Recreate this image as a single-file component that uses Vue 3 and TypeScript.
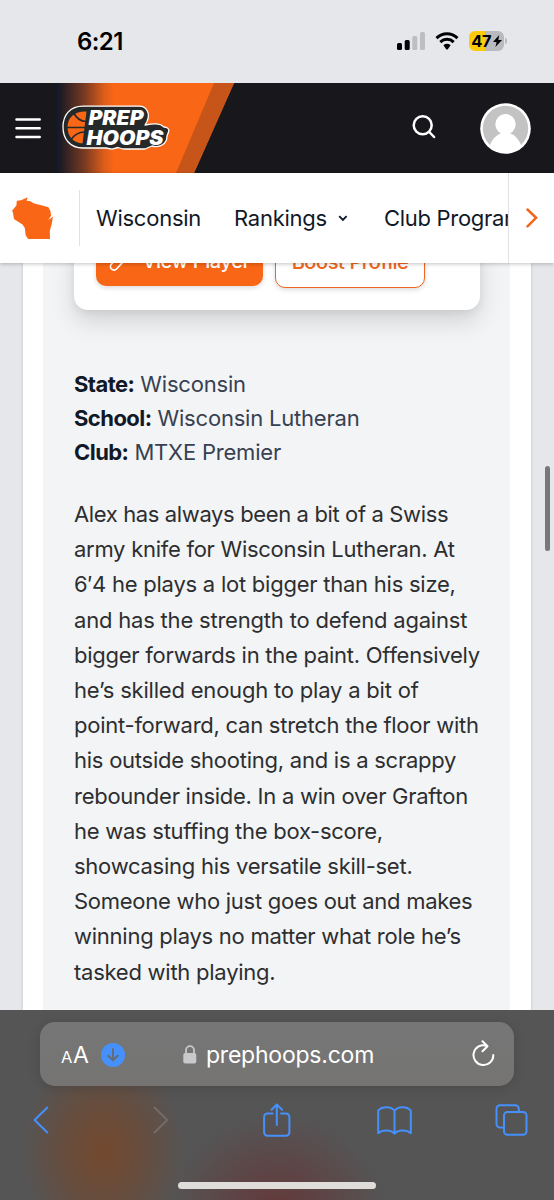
<script setup lang="ts">
interface Fact {
  label: string
  value: string
}

interface Line {
  text: string
  tracking: number
}

const facts: Fact[] = [
  { label: 'State:', value: 'Wisconsin' },
  { label: 'School:', value: 'Wisconsin Lutheran' },
  { label: 'Club:', value: 'MTXE Premier' },
]

const lines: Line[] = [
  { text: 'Alex has always been a bit of a Swiss', tracking: -0.37 },
  { text: 'army knife for Wisconsin Lutheran. At', tracking: -0.27 },
  { text: '6′4 he plays a lot bigger than his size,', tracking: -0.24 },
  { text: 'and has the strength to defend against', tracking: -0.2 },
  { text: 'bigger forwards in the paint. Offensively', tracking: -0.26 },
  { text: 'he’s skilled enough to play a bit of', tracking: -0.2 },
  { text: 'point-forward, can stretch the floor with', tracking: -0.25 },
  { text: 'his outside shooting, and is a scrappy', tracking: -0.25 },
  { text: 'rebounder inside. In a win over Grafton', tracking: -0.26 },
  { text: 'he was stuffing the box-score,', tracking: -0.27 },
  { text: 'showcasing his versatile skill-set.', tracking: -0.26 },
  { text: 'Someone who just goes out and makes', tracking: -0.27 },
  { text: 'winning plays no matter what role he’s', tracking: -0.25 },
  { text: 'tasked with playing.', tracking: -0.25 },
]
</script>

<template>
  <div class="phone">
    <div class="status">
      <span class="time">6:21</span>
      <div class="indicators">
        <svg class="signal" width="28" height="18" viewBox="0 0 28 18">
          <rect x="0" y="11" width="5" height="7" rx="1.5" />
          <rect x="7.7" y="8" width="5" height="10" rx="1.5" />
          <rect class="off" x="15.3" y="4" width="5" height="14" rx="1.5" />
          <rect class="off" x="23" y="0" width="5" height="18" rx="1.5" />
        </svg>
        <svg class="wifi" width="24" height="18" viewBox="0 0 24 18">
          <path d="M1.5 6.2C7.5.4 16.5.4 22.5 6.2M5.3 10.1C9.2 6.4 14.8 6.4 18.7 10.1" />
          <path class="dot" d="M8.4 13.2Q12 10.4 15.6 13.2L13 16.9Q12 18 11 16.9Z" />
        </svg>
        <div class="battery">
          <span>47</span>
          <svg width="9" height="12" viewBox="0 0 9 12"><path d="M6.2 0 0 6.9h3.6L2.4 12 9 4.9H5.3Z" /></svg>
        </div>
        <i class="cap"></i>
      </div>
    </div>

    <header class="brand-bar">
      <svg class="burger" width="26" height="21" viewBox="0 0 26 21">
        <path d="M1.5 1.6h23.2M1.5 10.3h23.2M1.5 19h23.2" />
      </svg>
      <svg class="banner" width="178" height="90" viewBox="0 0 178 90">
        <defs>
          <linearGradient id="fade" x1="0" x2="58" y1="0" y2="0" gradientUnits="userSpaceOnUse">
            <stop offset="0" stop-color="#111827" />
            <stop offset=".09" stop-color="#201c24" />
            <stop offset=".5" stop-color="#7b3b22" />
            <stop offset=".82" stop-color="#da5c1a" />
            <stop offset="1" stop-color="#f96716" />
          </linearGradient>
        </defs>
        <path d="M0 0H178L138 90H0Z" fill="url(#fade)" />
        <path d="M158 0H178L138 90H120Z" fill="#c75519" />
        <g transform="translate(6 22)">
          <path
            d="M21 1.2H77C85 1.2 88.5 9 85 16.5L83 20C92 18.5 98 18 102 22C105 22 108 24 106.5 27L105 31C105 39 98 43 90 41L83 44H61L56 42.5L50 44.2L44 43H21C8 43 1 34 1 22S8 1.2 21 1.2Z"
            fill="#26292a" stroke="#fff" stroke-width="1.3" stroke-linejoin="round" />
          <path d="M24.5 6.5C13 6 5.5 12 5.5 22S12 38 20.5 38.5L24.5 6.5Z" fill="#f96716" />
          <path d="M5 22.5H23.5M12 8.5Q16 16 24 16.5M8.5 35.2Q14 27 22.5 27" fill="none" stroke="#26292a" stroke-width="1.7" />
          <text x="26.5" y="20.4" textLength="55" lengthAdjust="spacingAndGlyphs">PREP</text>
          <text x="24.5" y="39.8" textLength="77" lengthAdjust="spacingAndGlyphs">HOOPS</text>
        </g>
      </svg>
      <svg class="search" width="24" height="24" viewBox="0 0 24 24">
        <circle cx="10.7" cy="10.3" r="9" />
        <path d="m17.3 17 4.8 5" />
      </svg>
      <svg class="avatar" width="51" height="51" viewBox="0 0 51 51">
        <defs><clipPath id="face"><circle cx="25.5" cy="25.5" r="24" /></clipPath></defs>
        <circle cx="25.5" cy="25.5" r="25.3" fill="#fff" />
        <circle cx="25.5" cy="25.5" r="22.7" fill="#c3c3c3" />
        <g clip-path="url(#face)" fill="#fff">
          <circle cx="25.5" cy="21.3" r="10.2" />
          <path d="M9.5 43C13 34 19 29.5 25.5 29.5S38 34 41.5 43V51H9.5Z" />
        </g>
      </svg>
    </header>

    <nav class="tabs">
      <svg class="state" width="42" height="43" viewBox="0 0 42 43">
        <path
          d="M4.8 3.8 9 3.3 15.7.2 14.5 3.8 18.5 4.2 21.5 6.3 33 9.2 36.5 10.2 38.6 14.5 39 19 36.2 23 41 19.7 39.6 27.5 37.8 34 38 42H16.2L13.7 38.4 12.8 31 10.5 27.5 1.9 22 1.1 16.5.2 13.6 4.4 8.6Z" />
      </svg>
      <div class="links">
        <span class="wi">Wisconsin</span>
        <span class="rank">Rankings</span>
        <svg class="caret" width="10" height="7" viewBox="0 0 10 7"><path d="m1.2 1.2 3.7 3.7L8.6 1.2" /></svg>
        <span class="club">Club Programs</span>
      </div>
      <div class="more">
        <svg width="12" height="20" viewBox="0 0 12 20"><path d="m1.5 1.5 8.6 8.3-8.6 8.5" /></svg>
      </div>
    </nav>

    <main class="viewport">
      <div class="sheet">
        <article class="panel">
          <div class="card">
            <div class="btn primary">
              <svg width="17" height="18" viewBox="0 0 17 18">
                <path d="M6 7 2.5 11a3.5 3.5 0 0 0 5 5l6.5-7a3.5 3.5 0 0 0-5-5" />
              </svg>
              <span>View Player</span>
            </div>
            <div class="btn outline"><span>Boost Profile</span></div>
          </div>
          <div class="facts">
            <div v-for="fact in facts" :key="fact.label">
              <b>{{ fact.label }}</b> <span>{{ fact.value }}</span>
            </div>
          </div>
          <p class="story">
            <span v-for="line in lines" :key="line.text" :style="{ letterSpacing: line.tracking + 'px' }">{{ line.text }}</span>
          </p>
        </article>
      </div>
      <i class="thumb"></i>
    </main>

    <footer class="browser">
      <div class="address">
        <span class="small-a">A</span><span class="big-a">A</span>
        <svg class="download" width="24" height="24" viewBox="0 0 24 24">
          <circle cx="12" cy="12" r="12" /><path d="M12 6v11M7.3 12.7 12 17.3l4.7-4.6" />
        </svg>
        <svg class="lock" width="14" height="19" viewBox="0 0 14 19">
          <rect x=".3" y="8" width="13" height="10.5" rx="2" />
          <path d="M3 9V5.2a4 4 0 0 1 8 0V9" />
        </svg>
        <span class="host">prephoops.com</span>
        <svg class="reload" width="23" height="27" viewBox="0 0 23 27">
          <path d="M14.8 5.9A9.9 9.9 0 1 0 21.3 15M10.5 1.2l5 5-5 5" />
        </svg>
      </div>
      <div class="tools">
        <svg class="back" width="16" height="28" viewBox="0 0 16 28"><path d="M14.3 1.5 1.6 14l12.7 12.5" /></svg>
        <svg class="dim" width="16" height="28" viewBox="0 0 16 28"><path d="M1.5 1.5 14.2 14 1.5 26.5" /></svg>
        <svg class="share" width="28" height="34" viewBox="0 0 28 34">
          <path d="M9.5 10.5H4.5A3.4 3.4 0 0 0 1.1 13.9V29.3A3.4 3.4 0 0 0 4.5 32.7H23A3.4 3.4 0 0 0 26.4 29.3V13.9A3.4 3.4 0 0 0 23 10.5H18M13.8 22V1.5M8.5 6.7 13.8 1.5 19.1 6.7" />
        </svg>
        <svg class="book" width="35" height="29" viewBox="0 0 35 29">
          <path d="M17.5 4.8C14 .2 5.5.2 1.2 4.5V27.2C5.5 23.5 14 23.5 17.5 27.7 21 23.5 29.5 23.5 33.8 27.2V4.5C29.5.2 21 .2 17.5 4.8V27.7" />
        </svg>
        <svg width="33" height="32" viewBox="0 0 33 32">
          <rect x="9" y="8" width="22.5" height="22.7" rx="3.5" />
          <path d="M9 23.5H5a3.5 3.5 0 0 1-3.5-3.5V4.7A3.5 3.5 0 0 1 5 1.2h15.3A3.5 3.5 0 0 1 23.8 4.7V8" />
        </svg>
      </div>
      <i class="home"></i>
    </footer>
  </div>
</template>

<style>
body {
  margin: 0;
}
</style>

<style scoped>
.phone {
  width: 554px;
  height: 1200px;
  overflow: hidden;
  display: flex;
  flex-direction: column;
  background: #e5e7eb;
  font-family: Inter, "Liberation Sans", sans-serif;
}
svg {
  display: block;
  flex: none;
}
i {
  display: block;
}
.status {
  height: 83px;
  flex: none;
  display: flex;
  justify-content: space-between;
  box-sizing: border-box;
  padding: 0 47px 0 77px;
}
.time {
  font-size: 24px;
  font-weight: 600;
  line-height: 83px;
  letter-spacing: -0.6px;
}
.indicators {
  display: flex;
  align-items: center;
  height: 82px;
}
.signal .off {
  fill: #bdbec1;
}
.wifi {
  margin: 0 10px 0 10px;
  fill: none;
  stroke: #000;
  stroke-width: 3;
}
.wifi .dot {
  fill: #000;
  stroke: none;
}
.battery {
  width: 35px;
  height: 20px;
  border-radius: 6px;
  background: linear-gradient(90deg, #fdcb0b 47%, #b9babd 47%);
  display: flex;
  align-items: center;
  justify-content: center;
  font-size: 16.5px;
  font-weight: 700;
  letter-spacing: -0.5px;
  line-height: 20px;
  gap: 1.5px;
}
.cap {
  width: 2px;
  height: 6px;
  margin-left: 1px;
  border-radius: 0 3px 3px 0;
  background: #b9babd;
}
.brand-bar {
  height: 90px;
  flex: none;
  display: flex;
  align-items: center;
  background: #18171c;
}
.burger {
  margin: 0 0 0 15px;
  stroke: #fff;
  stroke-width: 2.5;
  stroke-linecap: round;
}
.banner {
  margin-left: 15px;
}
.banner text {
  font-family: Inter, sans-serif;
  font-size: 19.5px;
  font-weight: 900;
  font-style: italic;
  fill: #fff;
}
.search {
  margin: -2px 0 0 178px;
  fill: none;
  stroke: #fff;
  stroke-width: 2.5;
  stroke-linecap: round;
}
.avatar {
  margin-left: 44px;
}
.tabs {
  height: 90px;
  flex: none;
  display: flex;
  align-items: center;
  background: #fff;
  position: relative;
  z-index: 2;
  box-shadow: 0 1px 4px rgba(0, 0, 0, 0.24);
}
.state {
  margin: 0 25px 0 12px;
  fill: #f96716;
}
.links {
  width: 429px;
  height: 56px;
  box-sizing: border-box;
  border-left: 1px solid #e1e2e5;
  padding-left: 16px;
  display: flex;
  align-items: center;
  overflow: hidden;
  white-space: nowrap;
  color: #111827;
  font-size: 22px;
  letter-spacing: -0.25px;
}
.links span {
  flex: none;
  line-height: 54px;
}
.wi {
  width: 138px;
}
.rank {
  width: 104px;
}
.caret {
  margin-right: 36px;
  fill: none;
  stroke: #111827;
  stroke-width: 1.9;
}
.club {
  letter-spacing: -0.3px;
}
.more {
  width: 46px;
  height: 90px;
  box-sizing: border-box;
  border-left: 1px solid #e1e2e5;
  display: flex;
  align-items: center;
  padding-left: 17px;
}
.more svg {
  fill: none;
  stroke: #f0661d;
  stroke-width: 2.5;
  stroke-linecap: round;
}
.viewport {
  height: 747px;
  flex: none;
  position: relative;
  overflow: hidden;
}
.sheet {
  width: 508px;
  height: 747px;
  margin: 0 auto;
  box-sizing: border-box;
  padding: 0 21px 0 20px;
  background: #fff;
  box-shadow: 0 0 3px rgba(0, 0, 0, 0.16);
}
.panel {
  height: 747px;
  overflow: hidden;
  background: #f3f4f6;
  padding: 0 30px 0 31px;
}
.card {
  height: 69px;
  margin-top: -22px;
  box-sizing: border-box;
  border-radius: 14px;
  background: #fff;
  padding: 0 22px;
  display: flex;
  gap: 12px;
  box-shadow: 0 12px 24px rgba(0, 0, 0, 0.13), 0 3px 8px rgba(0, 0, 0, 0.07);
}
.btn {
  box-sizing: border-box;
  flex: none;
  width: 167px;
  display: flex;
  justify-content: center;
  border-radius: 10px;
  font-size: 20px;
  font-weight: 500;
  line-height: 41px;
  letter-spacing: -0.4px;
  box-shadow: 0 2px 5px rgba(0, 0, 0, 0.14);
}
.primary {
  height: 45px;
  background: #f96716;
  color: #fff;
  gap: 16px;
}
.primary svg {
  margin-top: 12px;
  fill: none;
  stroke: #fff;
  stroke-width: 1.7;
}
.outline {
  width: 150px;
  height: 47px;
  border: 1.5px solid #f0661d;
  background: #fff;
  color: #f0661d;
}
.facts {
  margin-top: 57px;
  color: #374151;
  font-size: 22px;
  line-height: 34px;
  white-space: nowrap;
  letter-spacing: -0.2px;
}
.facts b {
  color: #111827;
  font-weight: 700;
  letter-spacing: -0.55px;
}
.story {
  margin: 28px 0 0;
  color: #2d2e30;
  font-size: 22px;
  line-height: 35.2px;
}
.story span {
  display: block;
  white-space: nowrap;
}
.thumb {
  position: absolute;
  right: 4px;
  top: 203px;
  width: 5px;
  height: 85px;
  border-radius: 3px;
  background: #77787a;
}
.browser {
  height: 190px;
  flex: none;
  box-sizing: border-box;
  padding: 12px 40px 0;
  background:
    radial-gradient(ellipse 82px 105px at 103px 142px, rgba(126, 67, 30, 0.72), rgba(126, 67, 30, 0.45) 45%, transparent),
    radial-gradient(ellipse 110px 100px at 277px 205px, rgba(110, 35, 35, 0.6), transparent),
    #555556;
}
.address {
  height: 64px;
  border-radius: 15px;
  background: linear-gradient(#767676, #757473);
  box-shadow: 0 2px 12px rgba(0, 0, 0, 0.15);
  display: flex;
  align-items: center;
  color: #fff;
  padding-left: 21px;
}
.small-a {
  font-size: 16.5px;
  margin-top: 6px;
  width: 12px;
}
.big-a {
  font-size: 23px;
  margin-top: 1px;
  width: 17px;
}
.download {
  margin: 2px 0 0 11px;
  fill: #4590fb;
  stroke: none;
}
.download path {
  fill: none;
  stroke: #666a70;
  stroke-width: 1.9;
  stroke-linecap: round;
  stroke-linejoin: round;
}
.lock {
  margin: 0 9px 0 58px;
  fill: #c9c8cb;
}
.lock path {
  fill: none;
  stroke: #c9c8cb;
  stroke-width: 1.8;
}
.host {
  width: 266px;
  margin-top: 1px;
  font-size: 23px;
  letter-spacing: -0.22px;
}
.reload {
  margin-top: -2px;
  fill: none;
  stroke: #fff;
  stroke-width: 2;
  stroke-linecap: round;
  stroke-linejoin: round;
}
.tools {
  height: 34px;
  margin: 17px -15px 0 -7px;
  display: flex;
  align-items: center;
}
.tools svg {
  fill: none;
  stroke: #4590fb;
  stroke-width: 2;
  stroke-linecap: round;
  stroke-linejoin: round;
}
.tools .back {
  margin-right: 104px;
}
.tools .dim {
  margin-right: 94px;
  stroke: #756b65;
}
.tools .share {
  margin-right: 86px;
}
.tools .book {
  margin-right: 83px;
}
.home {
  width: 198px;
  height: 7px;
  margin: 45px auto 0;
  border-radius: 4px;
  background: #deddda;
}
</style>
